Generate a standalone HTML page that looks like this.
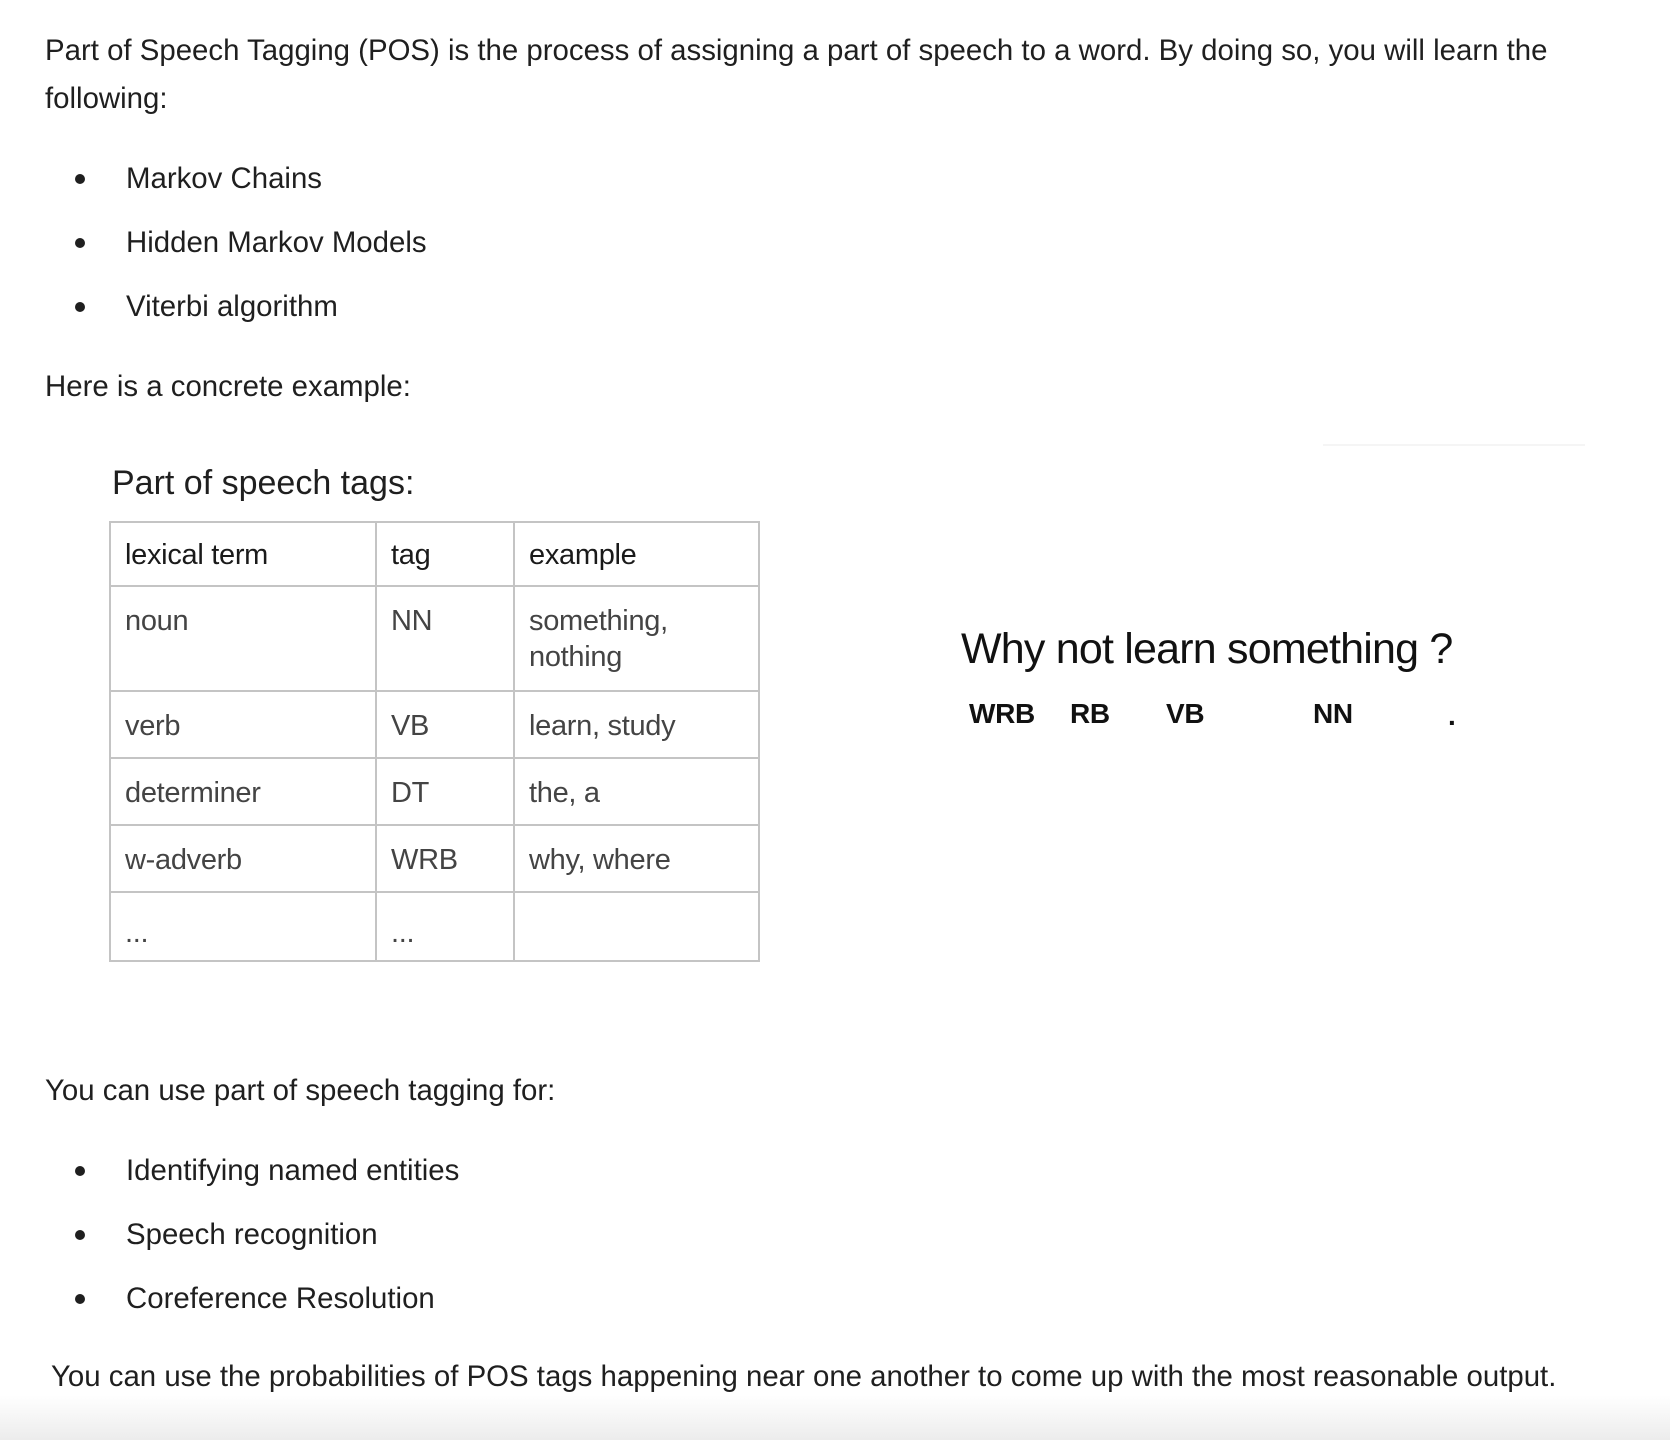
<!DOCTYPE html>
<html><head><meta charset="utf-8"><style>
body{margin:0;width:1670px;height:1440px;background:#fff;position:relative;overflow:hidden;font-family:"Liberation Sans",sans-serif;color:#1f1f1f}
.t{position:absolute;white-space:nowrap;font-size:29.4px;line-height:34px;letter-spacing:0}
.b{position:absolute;width:10px;height:10px;border-radius:50%;background:#1f1f1f}
table{position:absolute;left:109px;top:521px;border-collapse:collapse;width:651px}
td{border:2px solid #c4c4c4;vertical-align:top;padding:16px 14px 0 14px;font-size:29px;line-height:36px;color:#444;letter-spacing:-0.3px}
.h td{color:#1a1a1a;height:48px;padding-top:14px}
.grad{position:absolute;left:0;top:1395px;width:1670px;height:45px;background:linear-gradient(#fff,#ececec)}
.g{position:absolute;white-space:nowrap;font-size:28px;line-height:34px;font-weight:bold;color:#111;letter-spacing:-0.3px;top:697px}
</style></head><body>
<div class="t" style="left:45px;top:34px">Part of Speech Tagging (POS) is the process of assigning a part of speech to a word. By doing so, you will learn the</div>
<div class="t" style="left:45px;top:82px">following:</div>
<div class="b" style="left:75px;top:174px"></div><div class="t" style="left:126px;top:162px">Markov Chains</div>
<div class="b" style="left:75px;top:238px"></div><div class="t" style="left:126px;top:226px">Hidden Markov Models</div>
<div class="b" style="left:75px;top:302px"></div><div class="t" style="left:126px;top:290px">Viterbi algorithm</div>
<div class="t" style="left:45px;top:370px">Here is a concrete example:</div>
<div class="t" style="left:112px;top:463px;font-size:34px;line-height:40px">Part of speech tags:</div>
<div style="position:absolute;left:1323px;top:444px;width:262px;height:2px;background:#f5f5f5"></div>
<table>
<tr class="h"><td style="width:236px">lexical term</td><td style="width:108px">tag</td><td>example</td></tr>
<tr><td style="height:87px">noun</td><td>NN</td><td>something,<br>nothing</td></tr>
<tr><td style="height:49px">verb</td><td>VB</td><td>learn, study</td></tr>
<tr><td style="height:49px">determiner</td><td>DT</td><td>the, a</td></tr>
<tr><td style="height:49px">w-adverb</td><td>WRB</td><td>why, where</td></tr>
<tr><td style="height:45px;padding-top:22px">...</td><td style="padding-top:22px">...</td><td></td></tr>
</table>
<div class="t" style="left:961px;top:624px;font-size:43px;line-height:50px;letter-spacing:-0.8px;color:#111">Why not learn something ?</div>
<div class="g" style="left:969px">WRB</div>
<div class="g" style="left:1070px">RB</div>
<div class="g" style="left:1166px">VB</div>
<div class="g" style="left:1313px">NN</div>
<div class="g" style="left:1448px;top:699px">.</div>
<div class="t" style="left:45px;top:1074px">You can use part of speech tagging for:</div>
<div class="b" style="left:75px;top:1166px"></div><div class="t" style="left:126px;top:1154px">Identifying named entities</div>
<div class="b" style="left:75px;top:1230px"></div><div class="t" style="left:126px;top:1218px">Speech recognition</div>
<div class="b" style="left:75px;top:1294px"></div><div class="t" style="left:126px;top:1282px">Coreference Resolution</div>
<div class="t" style="left:51px;top:1360px">You can use the probabilities of POS tags happening near one another to come up with the most reasonable output.</div>
<div class="grad"></div>
</body></html>
